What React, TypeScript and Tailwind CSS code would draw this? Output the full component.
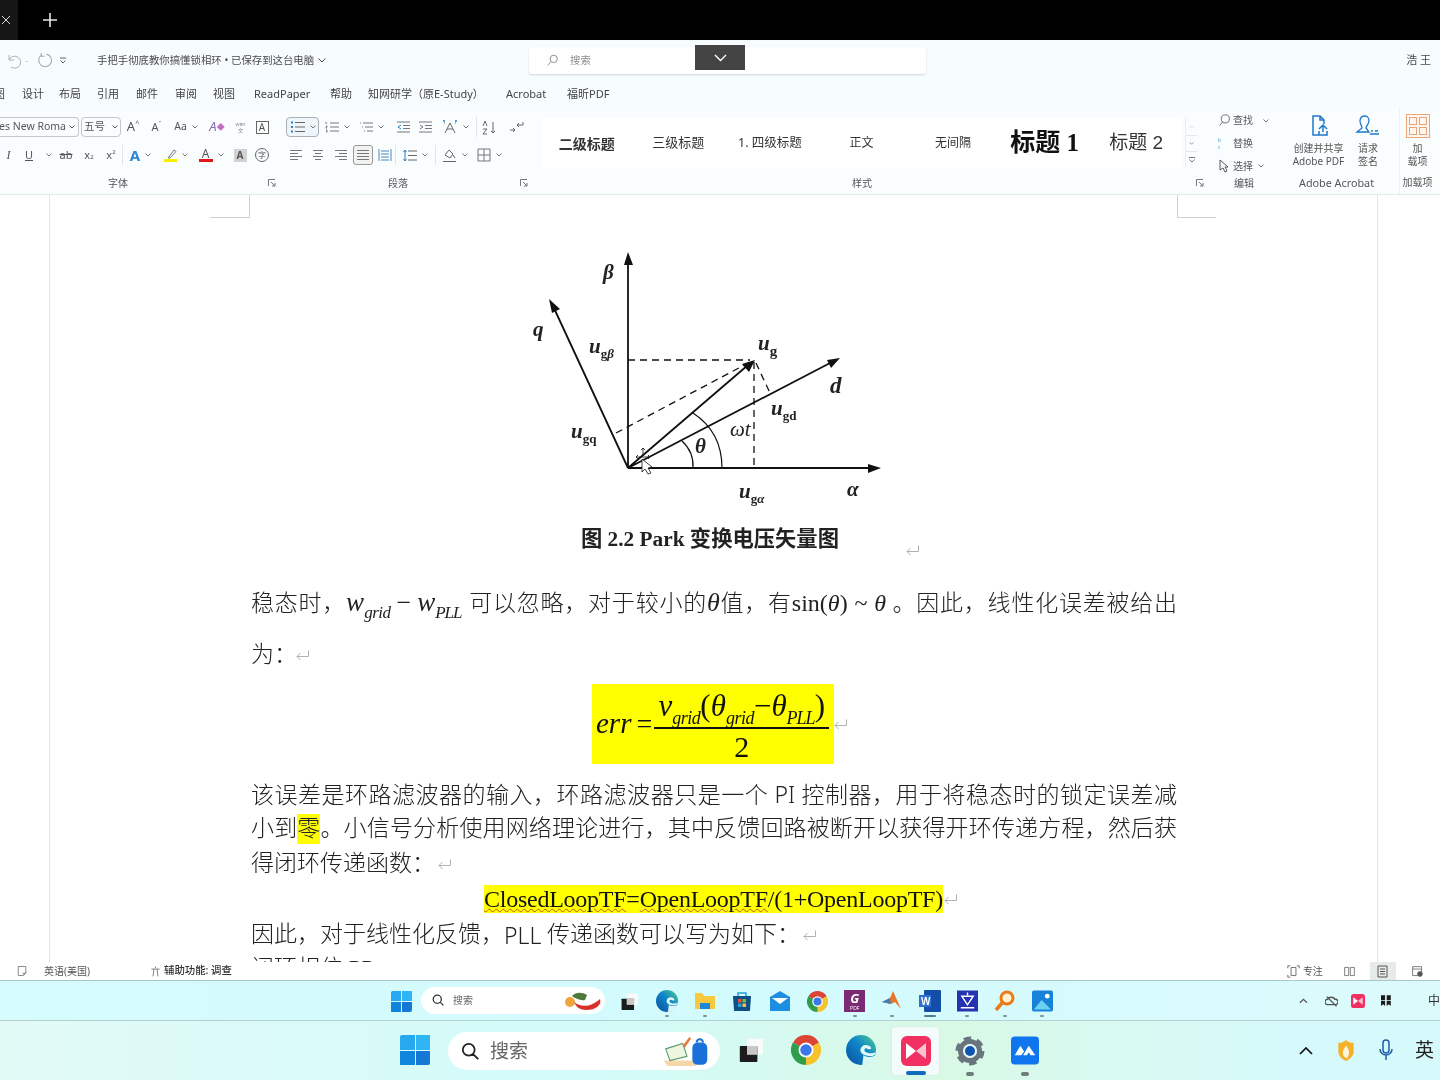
import React from "react";

const cjk = "font-['Noto_Sans','Noto_Sans_CJK_SC',sans-serif]";
const body = "font-['Liberation_Serif','Noto_Sans_CJK_SC',serif]";

type P = { className?: string; children?: React.ReactNode; vb?: string };
const I = ({ className = "w-4 h-4", children, vb = "0 0 16 16" }: P) => (
  <svg viewBox={vb} fill="none" stroke="currentColor" strokeWidth="1" className={className}>{children}</svg>
);
const Chev = () => (
  <I className="w-[6px] h-[4px] text-[#777] ml-[5px] shrink-0" vb="0 0 6 4"><path d="M.5.5 3 3 5.5.5" /></I>
);
const Launcher = () => (
  <I className="w-[8px] h-[8px] text-[#777]" vb="0 0 8 8"><path d="M.5 7V.5H7M3 3l4 4M7 4v3H4" /></I>
);
const Mark = ({ className = "" }: { className?: string }) => (
  <I className={`w-[15px] h-[13px] text-[#aeb2b2] shrink-0 ${className}`} vb="0 0 15 13"><path d="M13.5 1.5v6H2M5.5 4 2 7.5 5.5 11" /></I>
);
const Lines = ({ a = "left" }: { a?: "left" | "center" | "right" | "full" }) => {
  const m: Record<string, number[][]> = {
    left: [[1, 13], [1, 9], [1, 13], [1, 9]],
    center: [[2, 12], [4, 10], [2, 12], [4, 10]],
    right: [[1, 13], [5, 13], [1, 13], [5, 13]],
    full: [[1, 13], [1, 13], [1, 13], [1, 13]],
  };
  return (
    <I className="w-[14px] h-[12px] text-[#777]" vb="0 0 14 12">
      {m[a].map((l, i) => <path key={i} d={`M${l[0]} ${1.5 + i * 3}H${l[1]}`} />)}
    </I>
  );
};
const Cell = ({ className = "", children }: P) => (
  <div className={`flex items-center justify-center h-full shrink-0 ${className}`}>{children}</div>
);

const Win = ({ className }: { className: string }) => (
  <div className={`grid grid-cols-2 gap-[1px] shrink-0 ${className}`}>
    <div className="bg-[#27a9f0] rounded-tl-[2px]" />
    <div className="bg-[#2fb4f4]" />
    <div className="bg-[#0f86dc]" />
    <div className="bg-[#1478d4] rounded-br-[2px]" />
  </div>
);
const Chrome = ({ className }: { className: string }) => (
  <svg viewBox="0 0 24 24" className={className}>
    <path d="M12 12 1.6 6A12 12 0 0 1 22.4 6Z" fill="#dc4436" />
    <path d="M12 12 22.4 6A12 12 0 0 1 12 24Z" fill="#f6c22e" />
    <path d="M12 12 12 24A12 12 0 0 1 1.6 6Z" fill="#2f9e4c" />
    <circle cx="12" cy="12" r="6" fill="#fff" />
    <circle cx="12" cy="12" r="4.6" fill="#3b78e7" />
  </svg>
);
const Edge = ({ className, id }: { className: string; id: string }) => (
  <svg viewBox="0 0 24 24" className={className}>
    <defs>
      <linearGradient id={id} x1="0" y1="1" x2="1" y2="0">
        <stop offset="0" stopColor="#0b4f9e" />
        <stop offset=".55" stopColor="#0f86c8" />
        <stop offset="1" stopColor="#4fd08e" />
      </linearGradient>
    </defs>
    <circle cx="12" cy="12" r="12" fill={`url(#${id})`} />
    <path d="M24 14c-1 4-6 3-9 2-3-1-5-4-2-7 2-2 6-1 7 1 1 1-1 2-3 1-1-1-3 0-2 2 2 2 6 2 9 1Z" fill="#dff8fa" />
    <path d="M13 24c5 0 9-3 11-8-3 2-8 2-10 0l-1 8Z" fill="#d8f7f4" />
  </svg>
);
const Square = ({ className }: { className: string }) => (
  <svg viewBox="0 0 30 30" className={className}>
    <rect x="10" y="1" width="20" height="20" fill="#fafafa" />
    <rect x="1" y="10" width="22" height="20" rx="1" fill="#1c1c1c" />
    <rect x="10" y="10" width="13" height="11" fill="#c8c8c8" />
  </svg>
);
const Pink = ({ className }: { className: string }) => (
  <svg viewBox="0 0 30 30" className={className}>
    <rect width="30" height="30" rx="6" fill="#f12f60" />
    <path d="M5 7 15 15 5 23Z" fill="#fff" />
    <path d="M25 7 15 15 25 23Z" fill="#fbc2d0" />
  </svg>
);
const Gear = ({ className }: { className: string }) => (
  <svg viewBox="0 0 30 30" className={className}>
    <circle cx="15" cy="15" r="12" fill="none" stroke="#68757f" strokeWidth="5" strokeDasharray="7 5.57" />
    <circle cx="15" cy="15" r="9.5" fill="none" stroke="#68757f" strokeWidth="5" />
    <circle cx="15" cy="15" r="6.8" fill="#eaf6f6" />
    <circle cx="15" cy="15" r="5" fill="#0e54b0" />
  </svg>
);
const BlueM = ({ className }: { className: string }) => (
  <svg viewBox="0 0 30 30" className={className}>
    <rect width="30" height="30" rx="4" fill="#0f76f0" />
    <path d="M4 20 10 10l4 6-3 4H7l-1 0ZM13 20l6-10 7 10h-5l-2-3-2 3Z" fill="#fff" />
  </svg>
);
const Dot = ({ className = "bg-[#7f9191] w-[4px] h-[2px]" }: { className?: string }) => (
  <div className={`rounded-full ${className}`} />
);
const Slot = ({ children, dot }: { children: React.ReactNode; dot?: React.ReactNode }) => (
  <div className="w-[37.5px] h-full flex flex-col items-center shrink-0 pt-[9px]">
    <div className="h-[22px] flex items-center justify-center">{children}</div>
    <div className="mt-[3px] h-[2px]">{dot}</div>
  </div>
);

const Diagram = () => (
  <svg viewBox="251 218 926 307" className="w-[926px] h-[307px] block">
    <g stroke="#111" strokeWidth="1.8" fill="none">
      <path d="M628 468V258M628 468H874M628 468 553 306M628 468 832 362M628 468 748 365" />
      <path d="M628 360H750M754 362V468M616 433 752 361M756 363 770 393" strokeDasharray="7 5" strokeWidth="1.3" />
      <path d="M682 441Q694 452 693 468M693 413Q722 432 722 468" strokeWidth="1.2" />
    </g>
    <g fill="#111">
      <path d="M628 252 624 265H633ZM881 468 868 464V473ZM549 299 552 313 560 309ZM840 358 827 360 831 368ZM755 360 742 364 749 372Z" />
    </g>
    <g fontFamily="Liberation Serif" fontStyle="italic" fontWeight="700" fill="#222" fontSize="21">
      <text x="603" y="279">β</text>
      <text x="533" y="336">q</text>
      <text x="589" y="353">u<tspan fontSize="13" fontStyle="normal" dy="5">g</tspan><tspan fontSize="13" dy="0">β</tspan></text>
      <text x="758" y="350">u<tspan fontSize="15" fontStyle="normal" dy="6">g</tspan></text>
      <text x="830" y="393" fontSize="23">d</text>
      <text x="771" y="415">u<tspan fontSize="13" fontStyle="normal" dy="5">gd</tspan></text>
      <text x="730" y="436" fontWeight="400">ωt</text>
      <text x="695" y="453">θ</text>
      <text x="571" y="438">u<tspan fontSize="13" fontStyle="normal" dy="5">gq</tspan></text>
      <text x="739" y="498">u<tspan fontSize="13" fontStyle="normal" dy="5">g</tspan><tspan fontSize="13" dy="0">α</tspan></text>
      <text x="847" y="496">α</text>
    </g>
    <g stroke="#111" fill="#fff" strokeWidth=".8">
      <path d="M642 459V472L645 469 648 474 651 473 648 468 652 467Z" />
      <path d="M643 448V456M636 457H650M641 450l2-2 2 2M638 455l-2 2 2 2M648 455l2 2-2 2" fill="none" />
    </g>
  </svg>
);

export default function App() {
  return (
    <div className={`w-[1440px] h-[1080px] overflow-hidden flex flex-col bg-white text-[#444] blur-[0.45px] ${cjk}`}>
      {/* top black bar */}
      <div className="h-10 bg-black flex items-center shrink-0">
        <div className="w-[18px] h-full bg-[#161616] flex items-center pl-[1px] text-[#ddd]">
          <I className="w-[10px] h-[10px]" vb="0 0 10 10"><path d="M1 1l8 8M9 1 1 9" /></I>
        </div>
        <I className="w-[16px] h-[16px] ml-[24px] text-[#e8e8e8]" vb="0 0 16 16"><path d="M8 1v14M1 8h14" strokeWidth="1.6" /></I>
      </div>

      {/* title row */}
      <div className="h-10 bg-[#f7fdfe] flex shrink-0 text-[10.4px] text-[#4a4a4a] items-start pt-[7px]">
        <div className="flex items-center h-[27px] w-[529px] shrink-0 pl-[6px]">
          <I className="w-[16px] h-[16px] text-[#aeb4b6]"><path d="M3 2v5h5M3 7a6 6 0 1 1 2 7" /></I>
          <span className="ml-[3px] text-[#c2c6c8] w-[8px]">-</span>
          <I className="w-[17px] h-[17px] ml-[3px] text-[#a4aaac]"><path d="M10 2a6 6 0 1 1-5 1M5 1v3h3" /></I>
          <I className="w-[6px] h-[7px] ml-[7px] text-[#666]" vb="0 0 6 7"><path d="M0 1h6M.5 3.5 3 6l2.500-2.500" /></I>
          <span className="ml-[31px] whitespace-nowrap">手把手彻底教你搞懂锁相环 • 已保存到这台电脑</span>
          <I className="w-[8px] h-[5px] ml-[4px]" vb="0 0 8 5"><path d="M.5.5 4 4 7.500.5" /></I>
        </div>
        <div className="relative w-[397px] h-[27px] bg-white shadow-[0_1px_2px_rgba(0,0,0,0.15)] rounded-[3px] flex items-center pl-[17px] text-[#8d8d8d] shrink-0">
          <I className="w-[13px] h-[13px]"><path d="M2 14 6 9.500M14 6a4.500 4.500 0 1 1-9 0 4.500 4.500 0 0 1 9 0Z" strokeWidth="1.2" /></I>
          <span className="ml-[11px]">搜索</span>
          <div className="absolute left-[166px] -top-[2px] w-[50px] h-[25px] bg-[#444] flex items-center justify-center text-white">
            <I className="w-[13px] h-[8px]" vb="0 0 13 8"><path d="M1 1l5.500 5.500L12 1" strokeWidth="1.4" /></I>
          </div>
        </div>
        <div className="ml-auto pr-[9px] h-[27px] flex items-center text-[11px]">浩 王</div>
      </div>

      {/* tabs */}
      <div className="h-7 bg-[#f7fdfe] flex items-center shrink-0 text-[11px] text-[#444] whitespace-nowrap overflow-hidden">
        <div className="w-[22px] shrink-0 -ml-[6px] mr-[6px]">图</div>
        <div className="w-[37px] shrink-0">设计</div>
        <div className="w-[38px] shrink-0">布局</div>
        <div className="w-[39px] shrink-0">引用</div>
        <div className="w-[39px] shrink-0">邮件</div>
        <div className="w-[38px] shrink-0">审阅</div>
        <div className="w-[41px] shrink-0">视图</div>
        <div className="w-[76px] shrink-0">ReadPaper</div>
        <div className="w-[38px] shrink-0">帮助</div>
        <div className="w-[138px] shrink-0">知网研学（原E-Study）</div>
        <div className="w-[61px] shrink-0">Acrobat</div>
        <div>福昕PDF</div>
      </div>

      {/* ribbon */}
      <div className="h-[87px] bg-[#fafdfe] flex shrink-0 border-b border-[#e6eaea] text-[#555] whitespace-nowrap overflow-hidden">
        {/* font group */}
        <div className="w-[280px] shrink-0 pt-[9px] flex flex-col">
          <div className="h-5 flex items-center text-[10.500px]">
            <div className="w-[79px] h-full shrink-0 border border-l-0 border-[#c4c8c8] rounded-r-[4px] flex items-center justify-end pr-[3px] overflow-hidden">
              <span>es New Roma</span><I className="w-[6px] h-[4px] ml-[3px] shrink-0" vb="0 0 6 4"><path d="M.5.5 3 3 5.500.5" /></I>
            </div>
            <div className="w-[40px] h-full shrink-0 ml-[2px] border border-[#c4c8c8] rounded-[4px] flex items-center pl-[2px]">
              <span>五号</span><I className="w-[6px] h-[4px] ml-auto mr-[2px]" vb="0 0 6 4"><path d="M.5.5 3 3 5.500.5" /></I>
            </div>
            <Cell className="w-[24px] text-[13px]">A<sup className="text-[7px]">^</sup></Cell>
            <Cell className="w-[23px] text-[11px]">A<sup className="text-[7px]">ˇ</sup></Cell>
            <Cell className="w-[36px] text-[10.500px]">Aa<Chev /></Cell>
            <Cell className="w-[26px] text-[13px] text-[#8a6aa8]"><span className="italic">A</span><span className="text-[8px] text-[#c06fc0]">◆</span></Cell>
            <Cell className="w-[21px] text-[5px] leading-[6px] text-[#888]"><span className="text-center">wén<br />文</span></Cell>
            <Cell className="w-[22px]"><div className="w-[13px] h-[13px] border border-[#666] flex items-center justify-center text-[10px]">A</div></Cell>
          </div>
          <div className="h-5 mt-2 flex items-center text-[11px]">
            <Cell className="w-[17px] italic font-['Liberation_Serif'] text-[12px]">I</Cell>
            <Cell className="w-[24px]"><span className="underline">U</span></Cell>
            <Cell className="w-[10px]"><Chev /></Cell>
            <Cell className="w-[24px] ml-[3px]"><span className="line-through">ab</span></Cell>
            <Cell className="w-[22px]">x<sub className="text-[6px]">2</sub></Cell>
            <Cell className="w-[22px]">x<sup className="text-[6px]">2</sup></Cell>
            <div className="w-[1px] h-full bg-[#e4e6e6] shrink-0" />
            <Cell className="w-[23px] ml-[6px] text-[15px] font-bold text-[#2e86d8]">A<Chev /></Cell>
            <Cell className="w-[36px] ml-[6px]">
              <div className="flex flex-col items-center">
                <I className="w-[12px] h-[10px] text-[#777]" vb="0 0 12 10"><path d="M3 9 9 1l2 1.500L5 9Z" /></I>
                <div className="w-[13px] h-[3px] bg-[#f7ee00]" />
              </div><Chev />
            </Cell>
            <Cell className="w-[34px]">
              <div className="flex flex-col items-center leading-[10px] text-[12px]">A<div className="w-[14px] h-[3px] bg-[#e01818]" /></div><Chev />
            </Cell>
            <Cell className="w-[20px] ml-[2px]"><div className="w-[13px] h-[13px] bg-[#d2d2d2] flex items-center justify-center text-[10px] font-bold">A</div></Cell>
            <Cell className="w-[24px]"><div className="w-[14px] h-[14px] rounded-full border border-[#666] flex items-center justify-center text-[8px]">字</div></Cell>
          </div>
          <div className="h-[18px] mt-[9px] flex items-center text-[10px]">
            <span className="w-[236px] text-center">字体</span>
            <div className="ml-[32px]"><Launcher /></div>
          </div>
        </div>

        {/* paragraph group */}
        <div className="w-[261px] shrink-0 pt-[9px] flex flex-col">
          <div className="h-5 flex items-center">
            <Cell className="w-[33px] ml-[6px] border border-[#a8b0b4] bg-[#eef6fb] rounded-[4px] text-[#2c7fc4]">
              <I className="w-[15px] h-[12px]" vb="0 0 15 12"><path d="M1 1.500h2M1 6h2M1 10.500h2" strokeWidth="2" /><path d="M5 1.500h10M5 6h10M5 10.500h10" className="text-[#666]" /></I><Chev />
            </Cell>
            <Cell className="w-[28px] ml-[4px]"><I className="w-[14px] h-[12px] text-[#777]" vb="0 0 14 12"><path d="M1 1v2M1 5h1v1H1v1h1M1 9h1v2H1M5 2h9M5 6h9M5 10h9" /></I><Chev /></Cell>
            <Cell className="w-[29px] ml-[6px]"><I className="w-[14px] h-[12px] text-[#777]" vb="0 0 14 12"><path d="M1 2h1M4 2h10M3 6h1M6 6h8M5 10h1M8 10h6" /></I><Chev /></Cell>
            <Cell className="w-[22px] ml-[6px]"><I className="w-[14px] h-[12px] text-[#777]" vb="0 0 14 12"><path d="M1 1h13M7 4.500h7M7 7.500h7M1 11h13" /><path d="M5 4 2 6l3 2" className="text-[#2c7fc4]" /></I></Cell>
            <Cell className="w-[22px]"><I className="w-[14px] h-[12px] text-[#777]" vb="0 0 14 12"><path d="M1 1h13M7 4.500h7M7 7.500h7M1 11h13" /><path d="M2 4l3 2-3 2" /></I></Cell>
            <Cell className="w-[32px] ml-[3px]">
              <I className="w-[16px] h-[14px] text-[#666]" vb="0 0 16 14"><path d="M3 13 8 3l5 10M5 9h6M2 3h1M13 3h1" /><path d="M1 1h2M13 1h2" className="text-[#2c7fc4]" strokeWidth="1.500" /></I><Chev />
            </Cell>
            <div className="w-[1px] h-full bg-[#e4e6e6] ml-[5px] shrink-0" />
            <Cell className="w-[20px] ml-[2px]"><I className="w-[16px] h-[15px] text-[#666]" vb="0 0 16 15"><path d="M2 6 4 1l2 5M12 2v11M10 11l2 2 2-2M2 9h4L2 14h4" /></I></Cell>
            <Cell className="w-[20px] ml-[7px]"><I className="w-[15px] h-[13px] text-[#666]" vb="0 0 15 13"><path d="M1 9h5M4 7l2 2-2 2M14 1v3H8M10 2 8 4l2 2" /></I></Cell>
          </div>
          <div className="h-5 mt-2 flex items-center">
            <Cell className="w-[22px] ml-[5px]"><Lines a="left" /></Cell>
            <Cell className="w-[22px]"><Lines a="center" /></Cell>
            <Cell className="w-[23px]"><Lines a="right" /></Cell>
            <Cell className="w-[20px] ml-[1px] border border-[#9a9a9a] rounded-[3px] bg-[#f2f2f2]"><Lines a="full" /></Cell>
            <Cell className="w-[20px] ml-[2px]"><I className="w-[14px] h-[14px] text-[#4a86c0]" vb="0 0 14 14"><path d="M1 1v12M13 1v12M3 3h8M3 6h8M3 9h8M3 12h8" /></I></Cell>
            <div className="w-[1px] h-full bg-[#e4e6e6] shrink-0" />
            <Cell className="w-[30px] ml-[4px]"><I className="w-[14px] h-[13px] text-[#666]" vb="0 0 14 13"><path d="M5 2h9M5 6.500h9M5 11h9" /><path d="M2 1v11M.5 3 2 1l1.500 2M.5 10 2 12l1.500-2" className="text-[#2c7fc4]" /></I><Chev /></Cell>
            <div className="w-[1px] h-full bg-[#e4e6e6] ml-[5px] shrink-0" />
            <Cell className="w-[30px] ml-[4px]"><I className="w-[15px] h-[15px] text-[#666]" vb="0 0 15 15"><path d="M3 7l4-5 4 4-3 4ZM11 7l2 3M1 13.500h13" /></I><Chev /></Cell>
            <Cell className="w-[31px] ml-[4px]"><I className="w-[14px] h-[14px] text-[#777]" vb="0 0 14 14"><path d="M1 1h12v12H1ZM7 1v12M1 7h12" /></I><Chev /></Cell>
          </div>
          <div className="h-[18px] mt-[9px] flex items-center text-[10px]">
            <span className="w-[236px] text-center">段落</span>
            <div className="ml-[4px]"><Launcher /></div>
          </div>
        </div>

        {/* styles */}
        <div className="w-[669px] shrink-0 flex flex-col">
          <div className="mt-[10px] h-[50px] flex">
            <div className="w-[641px] grid grid-cols-7 items-center bg-white text-center text-[#333] shrink-0">
              <div className="font-bold text-[14px]">二级标题</div>
              <div className="text-[13px]">三级标题</div>
              <div className="text-[12.500px]">1. 四级标题</div>
              <div className="text-[12px]">正文</div>
              <div className="text-[12px]">无间隔</div>
              <div className={`text-[25px] font-bold text-[#111] ${body}`}>标题 1</div>
              <div className="text-[19px] font-['Liberation_Sans','Noto_Sans_CJK_SC',sans-serif]">标题 2</div>
            </div>
            <div className="w-[12px] ml-[3px] flex flex-col text-[#777] border-l border-[#eceeee]">
              <div className="h-[17px] flex items-center justify-center opacity-40"><I className="w-[5px] h-[3px]" vb="0 0 6 4"><path d="M.5 3.500 3 1l2.500 2.500" /></I></div>
              <div className="h-[17px] flex items-center justify-center border-y border-[#e6e8e8]"><I className="w-[5px] h-[3px]" vb="0 0 6 4"><path d="M.5.5 3 3 5.500.5" /></I></div>
              <div className="h-[16px] flex items-center justify-center"><I className="w-[6px] h-[6px]" vb="0 0 6 6"><path d="M0 .5h6M.5 2.500 3 5l2.500-2.500" /></I></div>
            </div>
          </div>
          <div className="h-[18px] mt-[6px] flex items-center text-[10px]">
            <span className="w-[642px] text-center">样式</span>
            <div className="ml-[13px]"><Launcher /></div>
          </div>
        </div>

        {/* editing */}
        <div className="w-[74px] shrink-0 flex flex-col text-[10px] pt-[1px]">
          <div className="h-[23px] flex items-center pl-[8px]">
            <I className="w-[13px] h-[13px] text-[#555]"><path d="M2 14 6 9.500M14 6a5 5 0 1 1-10 0 5 5 0 0 1 10 0Z" /></I>
            <span className="ml-[2px]">查找</span><div className="ml-[5px]"><Chev /></div>
          </div>
          <div className="h-[23px] flex items-center pl-[8px]">
            <span className="text-[8px] w-[13px] text-[#5a9ad0] leading-[7px]">ᵇ<br />ᶜ</span>
            <span className="ml-[2px]">替换</span>
          </div>
          <div className="h-[22px] flex items-center pl-[8px]">
            <I className="w-[13px] h-[14px] text-[#555]" vb="0 0 13 14"><path d="M2 1v10l3-2 2 4 2-1-2-4h3Z" /></I>
            <span className="ml-[2px]">选择</span><Chev />
          </div>
          <div className="h-[14px] mt-[-1px] flex items-center">
            <span className="ml-[24px]">编辑</span>
          </div>
        </div>

        {/* acrobat */}
        <div className="w-[115px] shrink-0 flex flex-col text-[10px] leading-[13px]">
          <div className="h-[72px] flex pt-[6px]">
            <div className="w-[69px] flex flex-col items-center">
              <I className="w-[22px] h-[24px] text-[#1e78c8] shrink-0" vb="0 0 22 24"><path d="M12 21H5V2h7l4 4v4M12 2v4h4M11 15l4-4 4 4M15 11v7M11 17v4h8v-4" strokeWidth="1.500" /></I>
              <span className="mt-[4px]">创建并共享</span>
              <span>Adobe PDF</span>
            </div>
            <div className="w-[22px] ml-[4px] flex flex-col items-center">
              <I className="w-[26px] h-[24px] text-[#1e78c8] shrink-0" vb="0 0 26 24"><path d="M10 2c-4 0-5 3-5 5 0 3 2 5 2 7l-5 4h12l-3-4c0-2 3-4 3-7 0-2-1-5-4-5ZM15 20h9M16 17h2M20 17h3" strokeWidth="1.300" /></I>
              <span className="mt-[4px]">请求</span>
              <span>签名</span>
            </div>
          </div>
          <div className="h-[18px] mt-[-7px] flex items-center pl-[15px] text-[#555] text-[10.800px]">Adobe Acrobat</div>
        </div>

        {/* add-in */}
        <div className="w-[45px] shrink-0 flex flex-col text-[10px] leading-[13px] items-center border-l border-[#eef0f0] pr-[9px]">
          <div className="h-[72px] flex flex-col items-center pt-[6px]">
            <div className="w-[24px] h-[24px] border border-[#eaa47a] grid grid-cols-2 gap-[2px] p-[2px] bg-[#fff6ef] shrink-0">
              <div className="border border-[#eaa47a]" /><div className="border border-[#eaa47a]" />
              <div className="border border-[#eaa47a]" /><div className="border border-[#eaa47a]" />
            </div>
            <span className="mt-[4px]">加</span>
            <span>载项</span>
          </div>
          <div className="h-[18px] mt-[-7px] flex items-center">加载项</div>
        </div>
      </div>

      {/* document */}
      <div className="h-[767px] bg-white overflow-hidden shrink-0 flex">
        <div className="w-[49px] shrink-0" />
        <div className="w-[1329px] shrink-0 border-x border-[#e4e6e6] overflow-hidden">
          <div className="h-[23px] flex">
            <div className="w-[160px] shrink-0" />
            <div className="w-[40px] h-full border-r border-b border-[#cfd2d2] shrink-0" />
            <div className="w-[927px] shrink-0" />
            <div className="w-[39px] h-full border-l border-b border-[#cfd2d2] shrink-0" />
          </div>
          <div className={`ml-[201px] w-[926px] text-[23px] font-light text-[#222] ${body}`}>
            <Diagram />
            <div className="h-[28px] flex items-center pl-[330px] whitespace-nowrap">
              <span className="text-[21.300px] font-bold leading-[28px]">图 2.2 Park 变换电压矢量图</span>
              <Mark className="ml-[66px] mt-[22px]" />
            </div>
            <div className="mt-[32px] h-[34px] leading-[34px] [text-align-last:justify] whitespace-nowrap">
              稳态时，
              <i className="text-[27px]">w<sub className="text-[17px] align-[-3px] tracking-[-0.5px]">grid</sub></i>
              <span className="text-[26px] mx-[6px]">−</span>
              <i className="text-[27px]">w<sub className="text-[17px] align-[-3px] tracking-[-1px]">PLL</sub></i>
              <span className="ml-[7px]">可以忽略，对于较小的</span><i className="text-[26px]">θ</i>值，有<span className="text-[24px]">sin(<i>θ</i>) ~ <i>θ</i></span> 。因此，线性化误差被给出
            </div>
            <div className="mt-[19px] h-[34px] flex items-center">为：<Mark className="ml-[-2px]" /></div>
            <div className="mt-[12px] h-[80px] flex items-center">
              <div className="ml-[341px] w-[242px] h-[80px] bg-[#ffff00] flex items-center pl-[4px] italic text-[#111] whitespace-nowrap">
                <span className="text-[29px]">err</span>
                <span className="text-[28px] not-italic ml-[5px] mr-[2px]">=</span>
                <div className="flex flex-col items-center w-[175px]">
                  <div className="h-[44px] border-b-2 border-[#111] w-full text-center text-[31px] leading-[42px]">
                    v<sub className="text-[18px] align-[-3px] tracking-[-0.5px]">grid</sub><span className="not-italic">(</span>θ<sub className="text-[18px] align-[-3px] tracking-[-0.5px]">grid</sub><span className="not-italic">−</span>θ<sub className="text-[18px] align-[-3px] tracking-[-1px]">PLL</sub><span className="not-italic">)</span>
                  </div>
                  <div className="h-[34px] text-[30px] not-italic leading-[36px]">2</div>
                </div>
              </div>
              <Mark className="ml-[-1px]" />
            </div>
            <div className="mt-[13px] h-[34px] leading-[34px] [text-align-last:justify] whitespace-nowrap">
              该误差是环路滤波器的输入，环路滤波器只是一个 <span className="font-['Noto_Sans']">PI</span> 控制器，用于将稳态时的锁定误差减
            </div>
            <div className="mt-[1px] h-[34px] leading-[34px] [text-align-last:justify] whitespace-nowrap">
              小到<span className="bg-[#ffff00] inline-block h-[30px] leading-[30px]">零</span>。小信号分析使用网络理论进行，其中反馈回路被断开以获得开环传递方程，然后获
            </div>
            <div className="mt-[1px] h-[34px] flex items-center">得闭环传递函数：<Mark className="ml-[2px]" /></div>
            <div className="mt-[1px] h-[34px] flex items-center">
              <span className="ml-[233px] bg-[#ffff00] h-[28px] leading-[28px] text-[24px] tracking-[-0.25px] whitespace-nowrap text-[#111]">
                <span className="underline decoration-wavy decoration-[#c55a11] decoration-1">ClosedLoopTF</span>=<span className="underline decoration-wavy decoration-[#c55a11] decoration-1">OpenLoopTF</span>/(1+OpenLoopTF)
              </span>
              <Mark />
            </div>
            <div className="mt-[2px] h-[34px] flex items-center whitespace-nowrap">
              因此，对于线性化反馈，<span className="font-['Noto_Sans']">PLL</span>&nbsp;传递函数可以写为如下：<Mark className="ml-[2px]" />
            </div>
            <div className="h-[34px] leading-[34px]">闭环相位 PP</div>
          </div>
        </div>
      </div>

      {/* status bar */}
      <div className="h-[19px] bg-white flex items-center shrink-0 text-[10px] text-[#555] whitespace-nowrap border-b border-[#a9c8cc]">
        <I className="w-[12px] h-[12px] ml-[16px] text-[#666]"><path d="M3 2h10v7l-3 5H3Z M9 10l2 3 3-4" /></I>
        <span className="ml-[16px]">英语(美国)</span>
        <I className="w-[13px] h-[13px] ml-[59px] text-[#666]"><path d="M8 2v2M3 5h10M6 5l-1 9M10 5l1 9" /></I>
        <span className="ml-[2px] font-medium text-[#333] text-[10.400px]">辅助功能: 调查</span>
        <I className="w-[13px] h-[13px] ml-[1055px] text-[#555]"><path d="M1 4V1h3M12 1h3v3M1 12v3h3M5 3h6v10H5Z" /></I>
        <span className="ml-[3px]">专注</span>
        <I className="w-[13px] h-[13px] ml-[20px] text-[#666]"><path d="M2 3h5v10H2ZM9 3h5v10H9Z" /></I>
        <div className="w-[26px] h-full ml-[14px] bg-[#e7eaea] flex items-center justify-center">
          <I className="w-[11px] h-[13px] text-[#555]" vb="0 0 11 13"><path d="M1 1h9v11H1ZM3 4h5M3 6.500h5M3 9h5" /></I>
        </div>
        <I className="w-[13px] h-[13px] ml-[15px] text-[#666]"><path d="M2 2h11v11H2ZM2 5h11" /><circle cx="11" cy="11" r="3" fill="#555" /></I>
      </div>

      {/* inner taskbar */}
      <div className="h-[40px] shrink-0 flex items-start bg-gradient-to-r from-[#d6fbfc] via-[#d2fbfd] to-[#dcfafc] border-b border-[#b4cfcf] whitespace-nowrap overflow-hidden">
        <Win className="w-[21px] h-[21px] ml-[391px] mt-[10px]" />
        <div className="w-[184px] h-[27px] mt-[6px] ml-[9px] shrink-0 bg-white rounded-full flex items-center pl-[11px] text-[10px] text-[#666]">
          <I className="w-[13px] h-[13px] text-[#333]"><path d="M14 14 10 10M11.500 6.500a5 5 0 1 1-10 0 5 5 0 0 1 10 0Z" strokeWidth="1.600" /></I>
          <span className="ml-[8px]">搜索</span>
          <svg viewBox="0 0 40 22" className="w-[40px] h-[22px] ml-[92px] shrink-0">
            <circle cx="5" cy="12" r="5" fill="#f2a43c" />
            <path d="M7 6c4-4 10-4 15-1l-2 5C15 11 10 8 7 6Z" fill="#4d7a3a" />
            <path d="M9 12c6 5 16 6 26-3 2 6-4 11-14 11-6 0-10-3-12-8Z" fill="#d8302b" />
          </svg>
        </div>
        <div className="h-full flex ml-[6px]">
          <Slot><Square className="w-[17px] h-[17px]" /></Slot>
          <Slot dot={<Dot />}><Edge id="e1" className="w-[22px] h-[22px]" /></Slot>
          <Slot dot={<Dot />}>
            <svg viewBox="0 0 22 22" className="w-[22px] h-[22px]"><path d="M1 3h7l2 3h11v13H1Z" fill="#f6c940" /><rect x="6" y="13" width="10" height="6" fill="#1e88d8" /></svg>
          </Slot>
          <Slot>
            <svg viewBox="0 0 22 22" className="w-[22px] h-[22px]"><path d="M2 6h18l-1 15H3Z" fill="#0f4f86" /><path d="M7 6V3h8v3" stroke="#2b9ed8" fill="none" strokeWidth="1.500" /><rect x="7" y="9" width="3.500" height="3.500" fill="#e8543a" /><rect x="11.500" y="9" width="3.500" height="3.500" fill="#7fbb3a" /><rect x="7" y="13.500" width="3.500" height="3.500" fill="#2b9ed8" /><rect x="11.500" y="13.500" width="3.500" height="3.500" fill="#f6c23a" /></svg>
          </Slot>
          <Slot>
            <svg viewBox="0 0 22 22" className="w-[22px] h-[22px]"><path d="M1 7 11 1l10 6v14H1Z" fill="#1e8fe0" /><path d="M3 8h16l-8 6Z" fill="#fff" /></svg>
          </Slot>
          <Slot><Chrome className="w-[21px] h-[21px]" /></Slot>
          <Slot dot={<Dot />}>
            <div className="w-[21px] h-[22px] bg-[#7b2a74] flex flex-col items-center justify-center text-white leading-none">
              <span className="text-[13px] italic font-bold leading-[13px]">G</span><span className="text-[5px] leading-[6px]">PDF</span>
            </div>
          </Slot>
          <Slot dot={<Dot />}>
            <svg viewBox="0 0 22 22" className="w-[22px] h-[22px]"><path d="M1 12 9 8l3-7 8 18-6-7-4 2Z" fill="#e8772c" /><path d="M1 12 9 8l1 6Z" fill="#3f7fb5" /></svg>
          </Slot>
          <Slot dot={<Dot className="bg-[#4c7f8f] w-[12px] h-[2px]" />}>
            <svg viewBox="0 0 22 22" className="w-[22px] h-[22px]"><rect x="5" width="17" height="22" rx="1" fill="#144ea8" /><rect x="0" y="5" width="12" height="12" fill="#2b6fd0" /><text x="2" y="15" fontSize="10" fontWeight="700" fill="#fff" fontFamily="Liberation Sans">W</text></svg>
          </Slot>
          <Slot dot={<Dot />}>
            <svg viewBox="0 0 22 22" className="w-[21px] h-[22px]"><rect width="22" height="22" fill="#2533b0" /><path d="M11 2v3M5 6l6 9 6-9ZM4 18h14" stroke="#fff" fill="none" strokeWidth="1.500" /></svg>
          </Slot>
          <Slot dot={<Dot />}>
            <svg viewBox="0 0 22 22" className="w-[22px] h-[22px]"><circle cx="13" cy="8" r="6" fill="#fff2d0" stroke="#ea7a18" strokeWidth="3" /><path d="M8 13 2 20" stroke="#ea7a18" strokeWidth="3.500" /></svg>
          </Slot>
          <Slot dot={<Dot />}>
            <svg viewBox="0 0 22 22" className="w-[21px] h-[22px]"><rect width="22" height="22" rx="2" fill="#1682d8" /><path d="M2 20 10 10l10 10Z" fill="#6cd0f0" /><circle cx="16" cy="6" r="2.500" fill="#fff" /></svg>
          </Slot>
        </div>
        <I className="w-[10px] h-[6px] ml-[238px] mt-[17px] text-[#555]" vb="0 0 10 6"><path d="M1 5 5 1l4 4" strokeWidth="1.300" /></I>
        <I className="w-[15px] h-[13px] ml-[17px] mt-[14px] text-[#555]" vb="0 0 15 13"><path d="M3 10a3 3 0 0 1 0-6c1-3 7-3 8 0a3 3 0 0 1 1 6ZM2 1l11 11" strokeWidth="1.500" /></I>
        <div className="ml-[13px] mt-[13px]"><Pink className="w-[14px] h-[14px]" /></div>
        <svg viewBox="0 0 12 14" className="w-[11px] h-[14px] ml-[16px] mt-[13px]"><path d="M0 0h5v6H0ZM7 0h5v6H7ZM0 7h5v6L2.500 11 0 13ZM7 7h5v6L9.500 11 7 13Z" fill="#1a1a1a" /></svg>
        <span className="ml-[37px] mt-[11px] text-[12px] text-[#333]">中</span>
      </div>

      {/* outer taskbar */}
      <div className="h-[60px] shrink-0 flex items-start bg-[linear-gradient(90deg,#e2faf6_0%,#d2fbfa_40%,#d9f9e6_66%,#d6fafc_90%)] whitespace-nowrap overflow-hidden">
        <Win className="w-[30px] h-[30px] ml-[400px] mt-[14px]" />
        <div className="w-[272px] h-[38px] mt-[11px] ml-[18px] shrink-0 bg-white rounded-full flex items-center pl-[13px] text-[19px] text-[#666]">
          <I className="w-[19px] h-[19px] text-[#222]"><path d="M14.500 14.500 10 10M11.500 6.500a5 5 0 1 1-10 0 5 5 0 0 1 10 0Z" strokeWidth="1.500" /></I>
          <span className="ml-[10px]">搜索</span>
          <svg viewBox="0 0 48 30" className="w-[52px] h-[32px] ml-[133px] shrink-0">
            <path d="M2 24h34l-4 5H6Z" fill="#f5d7a8" />
            <path d="M4 13l16-5 4 12-16 4Z" fill="#eef6e0" stroke="#5a9a6a" />
            <path d="M20 10l6-8 2 1-6 9Z" fill="#e87a3a" />
            <rect x="29" y="7" width="14" height="21" rx="5" fill="#1a6fd8" />
            <path d="M33 7a3 3 0 0 1 6 0" stroke="#1a6fd8" fill="none" strokeWidth="2" />
          </svg>
        </div>
        <div className="ml-[19px] mt-[14px]"><Square className="w-[24px] h-[30px]" /></div>
        <div className="ml-[28px] mt-[14px]"><Chrome className="w-[30px] h-[30px]" /></div>
        <div className="ml-[25px] mt-[14px]"><Edge id="e2" className="w-[30px] h-[30px]" /></div>
        <div className="ml-[16px] mt-[6px] w-[47px] h-[48px] bg-[#f4fbfb] rounded-[4px] flex flex-col items-center pt-[9px] shrink-0 shadow-[0_0_2px_rgba(0,0,0,0.08)]">
          <Pink className="w-[30px] h-[30px] shrink-0" />
          <div className="mt-[5px] w-[20px] h-[4px] rounded-full bg-[#0f6cbd] shrink-0" />
        </div>
        <div className="ml-[16px] mt-[15px] flex flex-col items-center">
          <Gear className="w-[30px] h-[30px]" />
          <div className="mt-[6px] w-[8px] h-[4px] rounded-full bg-[#6d7d7d]" />
        </div>
        <div className="ml-[26px] mt-[15px] flex flex-col items-center">
          <BlueM className="w-[28px] h-[29px]" />
          <div className="mt-[7px] w-[8px] h-[4px] rounded-full bg-[#6d7d7d]" />
        </div>
        <I className="w-[14px] h-[8px] ml-[260px] mt-[26px] text-[#111]" vb="0 0 14 8"><path d="M1 7l6-6 6 6" strokeWidth="1.700" /></I>
        <svg viewBox="0 0 18 22" className="w-[18px] h-[21px] ml-[24px] mt-[19px]">
          <path d="M1 3c3 0 6-1 8-3 2 2 5 3 8 3v9c0 5-4 8-8 10-4-2-8-5-8-10Z" fill="#f4b12a" />
          <path d="M9 6c4 4 4 9 1 13-5-1-6-7-1-13Z" fill="#fff4dc" />
        </svg>
        <I className="w-[16px] h-[22px] ml-[23px] mt-[18px] text-[#1e5ea8]" vb="0 0 16 22"><path d="M8 1a3 3 0 0 0-3 3v7a3 3 0 0 0 6 0V4a3 3 0 0 0-3-3ZM2 10a6 6 0 0 0 12 0M8 16v5" strokeWidth="1.500" /></I>
        <span className="ml-[21px] mt-[15px] text-[19px] text-[#222]">英</span>
      </div>
    </div>
  );
}
